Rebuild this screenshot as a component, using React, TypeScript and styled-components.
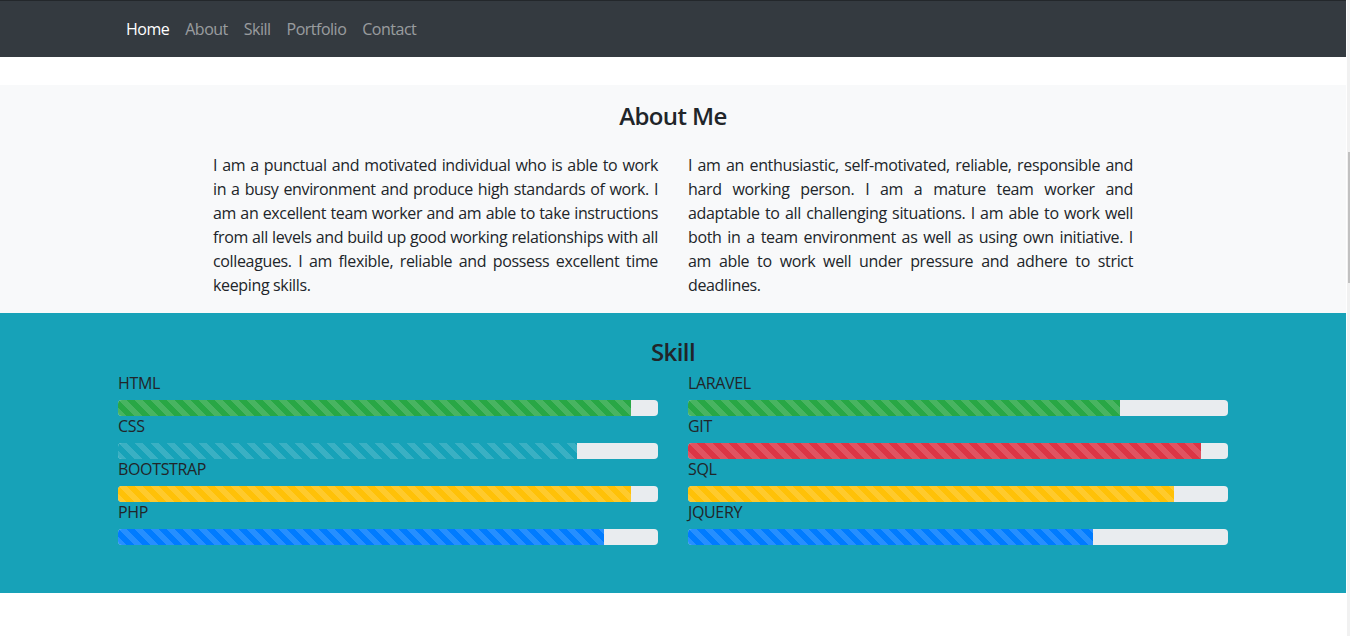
import React from 'react';
import styled, { createGlobalStyle } from 'styled-components';

const GlobalStyle = createGlobalStyle`
  html, body {
    margin: 0;
    padding: 0;
    background: #fff;
    overflow: hidden;
  }
  body {
    font-family: 'Open Sans', 'Noto Sans', sans-serif;
    font-size: 16px;
    line-height: 1.5;
    letter-spacing: -0.35px;
    color: #212529;
  }
  * {
    box-sizing: border-box;
  }
`;

const Page = styled.div`
  margin-right: 4px;
  min-height: 636px;
`;

const Container = styled.div`
  max-width: 1140px;
  margin: 0 auto;
  padding: 0 15px;
`;

const Navbar = styled.nav`
  background: #343a40;
  border-top: 1px solid #23272b;
  padding: 8px 0;
`;

const NavList = styled.ul`
  display: flex;
  list-style: none;
  margin: 0;
  padding: 0;
`;

const NavLink = styled.a<{ $active?: boolean }>`
  display: block;
  padding: 8px;
  line-height: 24px;
  letter-spacing: -0.5px;
  color: ${({ $active }) => ($active ? '#fff' : 'rgba(255,255,255,0.5)')};
  text-decoration: none;
`;

const AboutSection = styled.section`
  margin-top: 28px;
  background: #f8f9fa;
  padding: 17px 0 16px;
`;

const Title = styled.h4<{ $gap: number }>`
  margin: 0 0 ${({ $gap }) => $gap}px;
  font-size: 24px;
  font-weight: 600;
  letter-spacing: -0.6px;
  line-height: 1.2;
  text-align: center;
  color: #212529;
`;

const AboutGrid = styled.div`
  max-width: 920px;
  margin: 0 auto;
  display: grid;
  grid-template-columns: 1fr 1fr;
  column-gap: 30px;
`;

const Paragraph = styled.p`
  margin: 0;
  text-align: justify;
  line-height: 24px;
`;

const SkillSection = styled.section`
  background: #17a2b8;
  padding: 25px 0 48px;
`;

const SkillGrid = styled.div`
  display: grid;
  grid-template-columns: 1fr 1fr;
  column-gap: 30px;
`;

const SkillItem = styled.div``;

const SkillLabel = styled.div`
  line-height: 20px;
  margin-bottom: 7px;
  color: #212529;
`;

const Track = styled.div`
  display: flex;
  height: 16px;
  background: #e9ecef;
  border-radius: 4px;
  overflow: hidden;
`;

const Bar = styled.div<{ $color: string }>`
  height: 100%;
  background-color: ${({ $color }) => $color};
  background-image: linear-gradient(
    45deg,
    rgba(255, 255, 255, 0.15) 25%,
    transparent 25%,
    transparent 50%,
    rgba(255, 255, 255, 0.15) 50%,
    rgba(255, 255, 255, 0.15) 75%,
    transparent 75%,
    transparent
  );
  background-size: 16px 16px;
`;

const Scrollbar = styled.div`
  position: fixed;
  top: 0;
  right: 0;
  width: 3px;
  height: 100%;
  background: #f1f1f1;
`;

const ScrollThumb = styled.div`
  position: absolute;
  top: 152px;
  right: 0;
  width: 2px;
  height: 131px;
  background: #c1c1c1;
`;

const links = ['Home', 'About', 'Skill', 'Portfolio', 'Contact'];

const skills = [
  [
    { name: 'HTML', value: 95, color: '#28a745' },
    { name: 'CSS', value: 85, color: '#17a2b8' },
    { name: 'BOOTSTRAP', value: 95, color: '#ffc107' },
    { name: 'PHP', value: 90, color: '#007bff' },
  ],
  [
    { name: 'LARAVEL', value: 80, color: '#28a745' },
    { name: 'GIT', value: 95, color: '#dc3545' },
    { name: 'SQL', value: 90, color: '#ffc107' },
    { name: 'JQUERY', value: 75, color: '#007bff' },
  ],
];

const App = () => {
  return (
    <Page>
      <GlobalStyle />
      <Navbar>
        <Container>
          <NavList>
            {links.map((l, i) => (
              <li key={l}>
                <NavLink href="#" $active={i === 0}>{l}</NavLink>
              </li>
            ))}
          </NavList>
        </Container>
      </Navbar>

      <AboutSection>
        <Container>
          <Title $gap={22}>About Me</Title>
          <AboutGrid>
            <Paragraph>
              I am a punctual and motivated individual who is able to work in a busy environment and
              produce high standards of work. I am an excellent team worker and am able to take
              instructions from all levels and build up good working relationships with all
              colleagues. I am flexible, reliable and possess excellent time keeping skills.
            </Paragraph>
            <Paragraph>
              I am an enthusiastic, self-motivated, reliable, responsible and hard working person. I
              am a mature team worker and adaptable to all challenging situations. I am able to work
              well both in a team environment as well as using own initiative. I am able to work
              well under pressure and adhere to strict deadlines.
            </Paragraph>
          </AboutGrid>
        </Container>
      </AboutSection>

      <SkillSection>
        <Container>
          <Title $gap={6}>Skill</Title>
          <SkillGrid>
            {skills.map((col, ci) => (
              <div key={ci}>
                {col.map((s) => (
                  <SkillItem key={s.name}>
                    <SkillLabel>{s.name}</SkillLabel>
                    <Track>
                      <Bar $color={s.color} style={{ width: `${s.value}%` }} />
                    </Track>
                  </SkillItem>
                ))}
              </div>
            ))}
          </SkillGrid>
        </Container>
      </SkillSection>

      <Scrollbar>
        <ScrollThumb />
      </Scrollbar>
    </Page>
  );
};

export default App;
